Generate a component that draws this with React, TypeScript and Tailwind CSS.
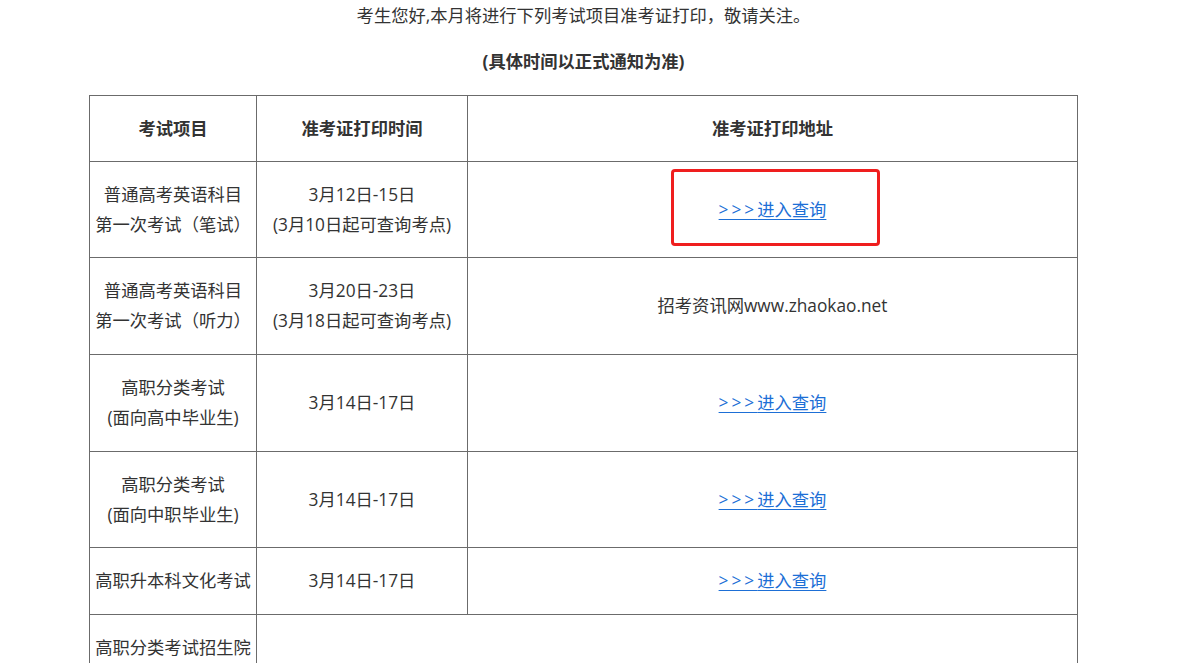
import React from "react";

const font = { fontFamily: '"Open Sans", "Noto Sans CJK SC", sans-serif' };

function Link() {
  return (
    <a href="#" className="text-[#1d6fd6] underline underline-offset-[3px] decoration-1">
      <span className="tracking-[3px]">&gt;&gt;&gt;</span>进入查询
    </a>
  );
}

export default function App() {
  const td = "border border-[#6b6b6b] text-center align-middle p-0";
  return (
    <div className="bg-white w-[1184px] h-[663px] overflow-hidden text-[#333] text-[17.3px] leading-[30px]" style={font}>
      <div className="ml-[89px] w-[989px]">
        <div className="text-center pt-[1px] h-[32px]">考生您好,本月将进行下列考试项目准考证打印，敬请关注。</div>
        <div className="text-center font-bold h-[63px] pt-[15px]">(具体时间以正式通知为准)</div>
        <table className="border-collapse w-[988px] table-fixed">
          <colgroup>
            <col className="w-[167px]" />
            <col className="w-[211px]" />
            <col className="w-[610px]" />
          </colgroup>
          <tbody>
            <tr className="h-[66px]">
              <td className={td + " font-bold"}>考试项目</td>
              <td className={td + " font-bold"}>准考证打印时间</td>
              <td className={td + " font-bold"}>准考证打印地址</td>
            </tr>
            <tr className="h-[96px]">
              <td className={td}>
                <div>普通高考英语科目</div>
                <div>第一次考试（笔试）</div>
              </td>
              <td className={td}>
                <div>3月12日-15日</div>
                <div>(3月10日起可查询考点)</div>
              </td>
              <td className={td}>
                <div className="inline-flex w-[209px] h-[77px] items-center justify-center pt-[5px] pr-[6px] border-[3px] border-[#ef1e1e] rounded-[4px] ml-[6px] translate-y-[-2px]">
                  <Link />
                </div>
              </td>
            </tr>
            <tr className="h-[97px]">
              <td className={td}>
                <div>普通高考英语科目</div>
                <div>第一次考试（听力）</div>
              </td>
              <td className={td}>
                <div>3月20日-23日</div>
                <div>(3月18日起可查询考点)</div>
              </td>
              <td className={td}>招考资讯网www.zhaokao.net</td>
            </tr>
            <tr className="h-[97px]">
              <td className={td}>
                <div>高职分类考试</div>
                <div>(面向高中毕业生)</div>
              </td>
              <td className={td}>3月14日-17日</td>
              <td className={td}>
                <Link />
              </td>
            </tr>
            <tr className="h-[96px]">
              <td className={td}>
                <div>高职分类考试</div>
                <div>(面向中职毕业生)</div>
              </td>
              <td className={td}>3月14日-17日</td>
              <td className={td}>
                <Link />
              </td>
            </tr>
            <tr className="h-[67px]">
              <td className={td}>高职升本科文化考试</td>
              <td className={td}>3月14日-17日</td>
              <td className={td}>
                <Link />
              </td>
            </tr>
            <tr className="h-[96px]">
              <td className={td + " align-top pt-[18px]"}>
                <div>高职分类考试招生院</div>
                <div>校官网</div>
              </td>
              <td className={td} colSpan={2}></td>
            </tr>
          </tbody>
        </table>
      </div>
    </div>
  );
}
